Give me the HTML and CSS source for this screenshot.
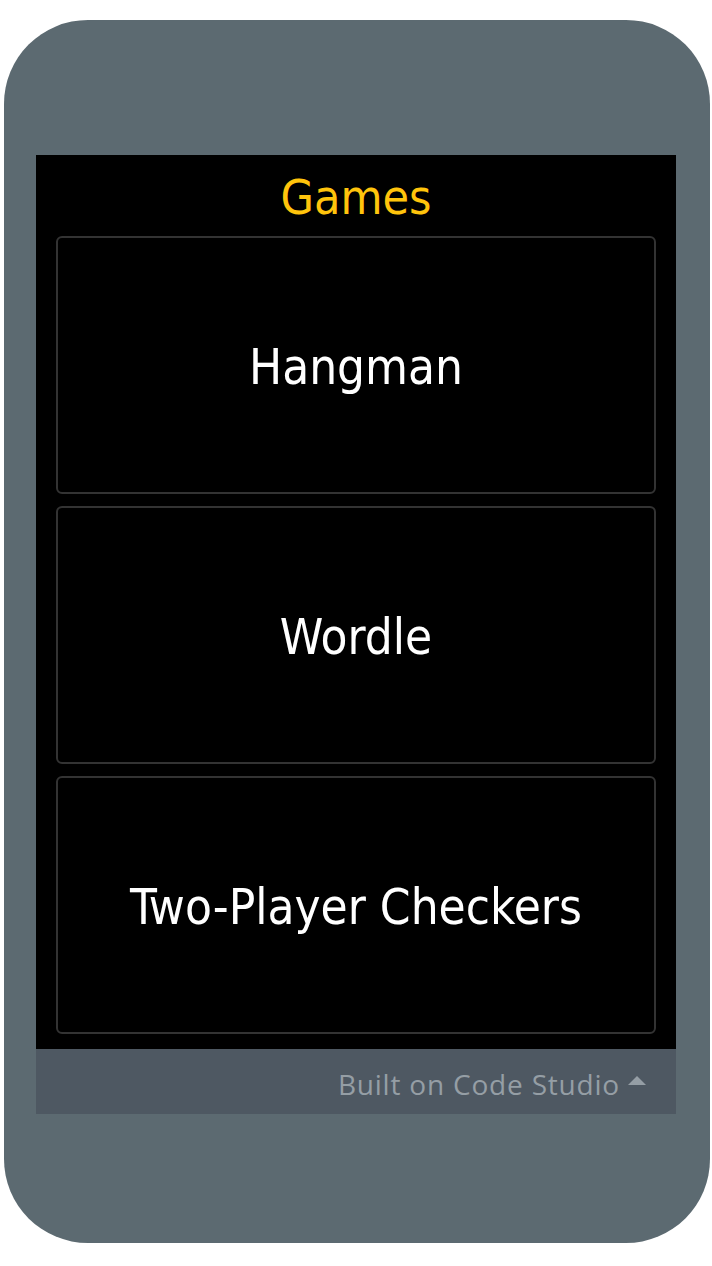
FILE: index.html
```html
<!DOCTYPE html>
<html lang="en">
<head>
    <meta charset="UTF-8">
    <meta name="viewport" content="width=device-width, initial-scale=1.0">
    <title>Games</title>
    <link rel="stylesheet" href="styles.css">
</head>
<body>
    <div class="phone">
        <div class="screen">
            <h1 class="title">Games</h1>
            <div class="game-list">
                <button class="game-btn">Hangman</button>
                <button class="game-btn">Wordle</button>
                <button class="game-btn">Two-Player Checkers</button>
            </div>
        </div>
        <div class="footer">
            <span class="footer-text">Built on Code Studio</span>
            <span class="caret"></span>
        </div>
    </div>
</body>
</html>
```

FILE: styles.css
```css
body {
    margin: 0;
    background-color: #fff;
    font-family: "DejaVu Sans Condensed", "DejaVu Sans", sans-serif;
}

.phone {
    box-sizing: border-box;
    width: 706px;
    height: 1223px;
    margin: 20px 0 0 4px;
    padding: 135px 34px 0 32px;
    background-color: #5c6a71;
    border-radius: 84px;
}

.screen {
    height: 894px;
    background-color: #000;
    display: flex;
    flex-direction: column;
    padding: 0 20px;
}

.title {
    margin: 0;
    height: 81px;
    line-height: 84px;
    text-align: center;
    color: #ffc40c;
    font-size: 48px;
    font-weight: normal;
}

.game-list {
    display: flex;
    flex-direction: column;
    gap: 12px;
}

.game-btn {
    height: 258px;
    padding-top: 5px;
    background-color: #000;
    color: #fff;
    border: 2px solid #333;
    border-radius: 6px;
    font-family: inherit;
    font-size: 49px;
}

.footer {
    height: 65px;
    padding-top: 5px;
    box-sizing: border-box;
    background-color: #4e5862;
    display: flex;
    align-items: center;
    justify-content: flex-end;
    gap: 8px;
    padding-right: 30px;
}

.footer-text {
    color: #959ea5;
    font-family: "Open Sans", sans-serif;
    font-size: 28px;
    letter-spacing: 0.8px;
}

.caret {
    width: 0;
    height: 0;
    border-left: 9px solid transparent;
    border-right: 9px solid transparent;
    border-bottom: 9px solid #959ea5;
    margin-bottom: 8px;
}
```
